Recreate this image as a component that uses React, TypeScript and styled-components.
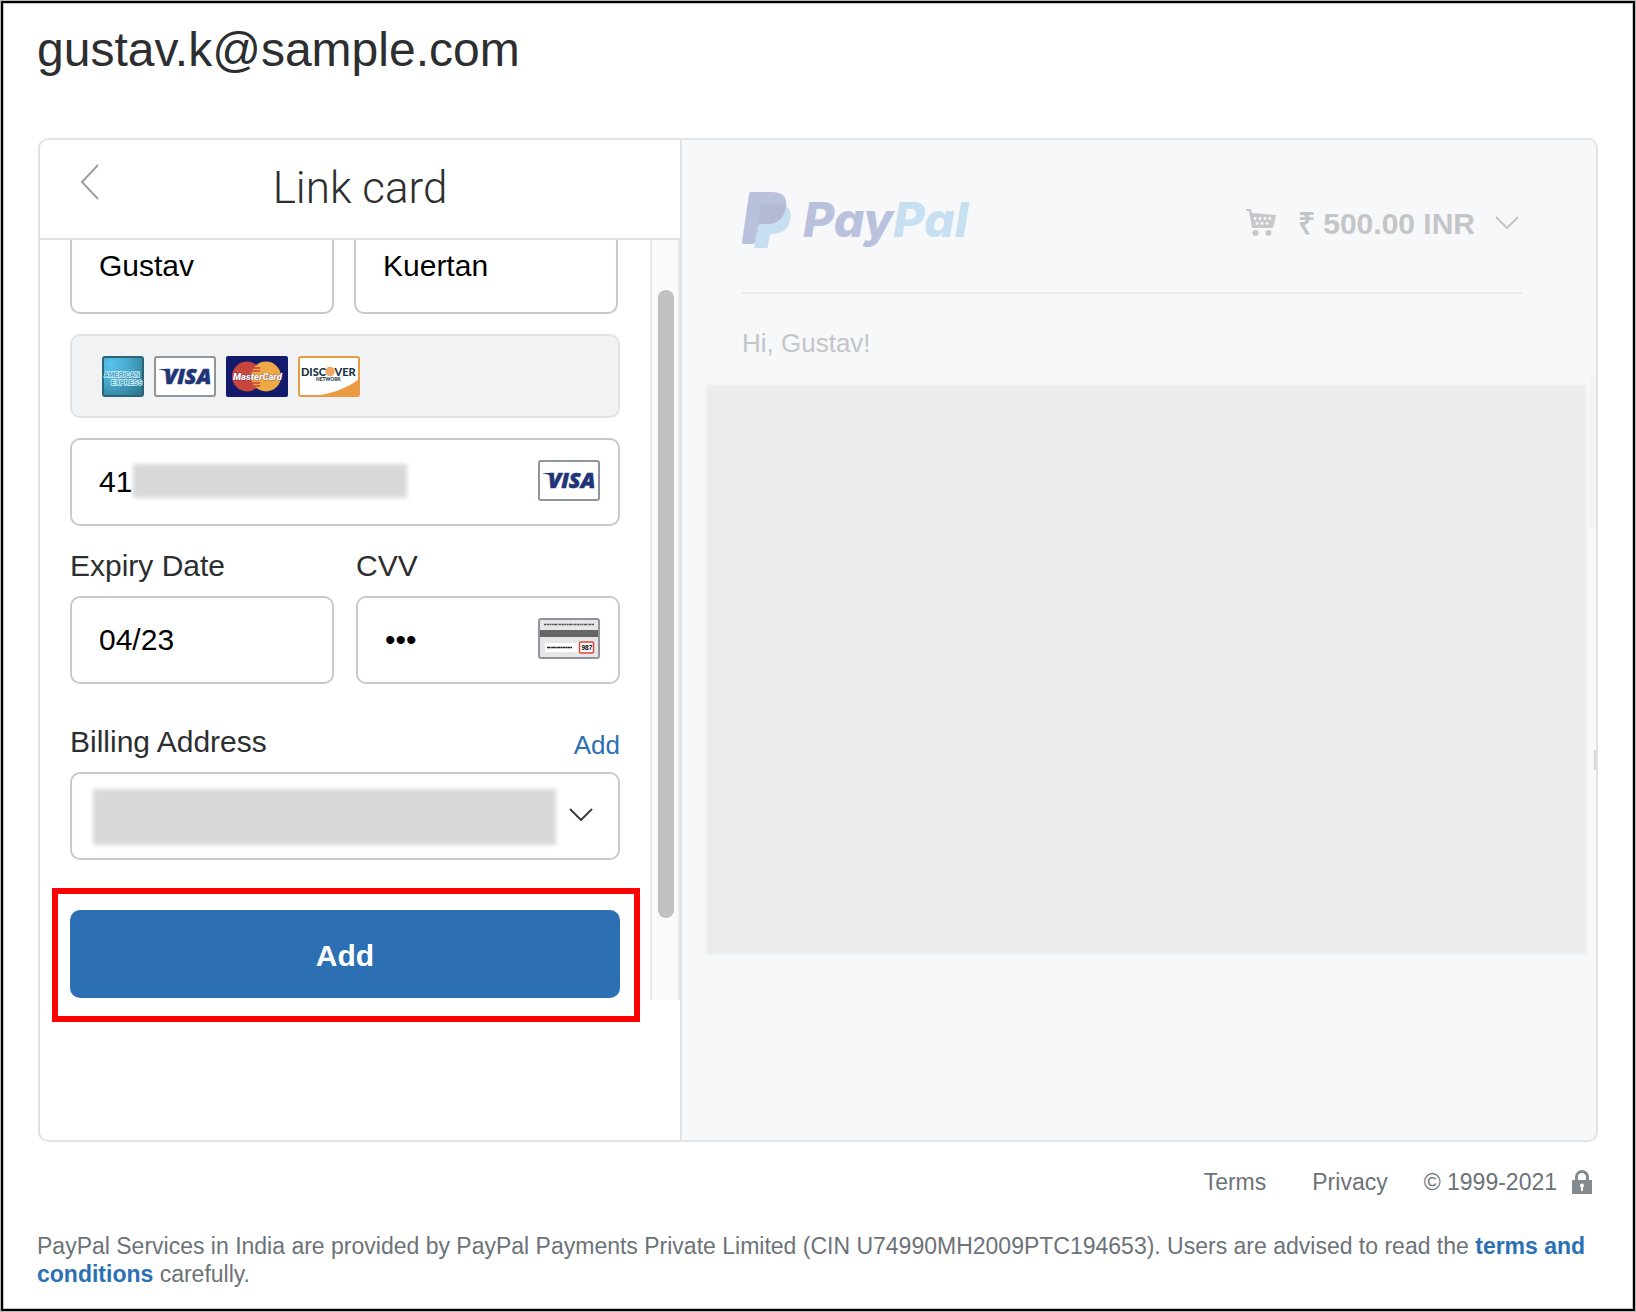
import React from "react";
import styled, { createGlobalStyle } from "styled-components";

const sans = `"Liberation Sans", Arial, Helvetica, sans-serif`;
const line = "#e1e2e3";
const fieldLine = "#c6cacf";
const blue = "#2c70b4";
const grey = "#6c7378";

const GlobalStyle = createGlobalStyle`
  *, *::before, *::after { box-sizing: border-box; }
  body { margin: 0; background: #fff; font-family: ${sans}; color: #2c2e2f; }
  button, input, select { font: inherit; }
`;

const Frame = styled.div`
  display: flex;
  min-height: 100vh;
  padding: 1px;
  background: #b8b8b8;
`;

const Page = styled.div`
  flex: 1;
  min-width: 0;
  padding: 19px 35px 20px 34px;
  border: 2px solid #000;
  background: #fff;
  box-shadow: inset 0 0 0 1px #c4c4c4;
`;

const Email = styled.h1`
  margin: 0 0 60px;
  font-size: 48px;
  line-height: 56px;
  font-weight: 400;
`;

const Card = styled.main`
  display: grid;
  grid-template-columns: 642px minmax(0, 1fr);
  min-height: 1004px;
  margin: 0 0 0 1px;
  border: 2px solid ${line};
  border-radius: 10px;
  overflow: hidden;
`;

const Wallet = styled.section`
  border-right: 2px solid ${line};
`;

const WalletHeader = styled.header`
  display: grid;
  grid-template-columns: 40px 1fr 40px;
  height: 100px;
  padding: 0 30px;
  border-bottom: 2px solid ${line};
`;

const IconButton = styled.button`
  display: flex;
  align-items: center;
  padding: 0;
  border: 0;
  background: none;
  color: inherit;
`;

const BackButton = styled(IconButton)`
  height: 84px;
  padding-left: 10px;
`;

const Title = styled.h2`
  margin: 0;
  text-align: center;
  font-family: Roboto, ${sans};
  font-size: 44px;
  line-height: 96px;
  font-weight: 300;
`;

const Scroller = styled.div`
  display: flex;
  overflow: hidden;
`;

const Form = styled.form`
  flex: 1;
  min-width: 0;
  margin-top: -22px;
  padding: 0 30px 30px;
`;

const Track = styled.div`
  width: 30px;
  height: 760px;
  padding: 50px 6px 0;
  border: solid #e8e8e8;
  border-width: 0 2px;
  background: #fafafa;
`;

const Thumb = styled.div`
  width: 16px;
  height: 628px;
  border-radius: 8px;
  background: #c1c1c1;
`;

const Row = styled.div<{ $gap: string }>`
  display: flex;
  gap: ${(p) => p.$gap};
`;

const Half = styled.div`
  flex: 0 0 48%;
`;

const Label = styled.label`
  display: block;
  font-size: 30px;
  line-height: 36px;
`;

const FieldBox = styled.div`
  position: relative;
`;

const Input = styled.input<{ $tall?: boolean }>`
  display: block;
  width: 100%;
  height: ${(p) => (p.$tall ? 96 : 88)}px;
  padding: 0 27px;
  border: 2px solid ${fieldLine};
  border-radius: 10px;
  background: #fff;
  color: #000;
  font-size: 30px;
`;

const Select = styled.select`
  display: block;
  appearance: none;
  width: 100%;
  height: 88px;
  padding: 0 27px;
  border: 2px solid ${fieldLine};
  border-radius: 10px;
  background: #fff;
`;

const Brands = styled.div`
  display: flex;
  align-items: center;
  gap: 10px;
  height: 84px;
  margin: 20px 0;
  padding: 0 30px;
  border: 2px solid ${line};
  border-radius: 10px;
  background: #f1f2f4;
`;

const FieldIcon = styled.span<{ $right: number }>`
  position: absolute;
  display: flex;
  align-items: center;
  top: 0;
  bottom: 4px;
  right: ${(p) => p.$right}px;
  pointer-events: none;
`;

const Redaction = styled.span<{ $top: number; $left: number; $width: number; $height: number }>`
  position: absolute;
  top: ${(p) => p.$top}px;
  left: ${(p) => p.$left}px;
  width: ${(p) => p.$width}px;
  height: ${(p) => p.$height}px;
  background: #d8d8d8;
  filter: blur(2px);
`;

const DateRow = styled(Row)`
  margin-top: 22px;
`;

const LabelGap = styled.div`
  margin-bottom: 12px;
`;

const AddressHead = styled.div`
  display: flex;
  align-items: flex-end;
  justify-content: space-between;
  margin: 40px 0 12px;
`;

const Link = styled.a`
  color: ${blue};
  text-decoration: none;
`;

const AddLink = styled(Link)`
  font-size: 26px;
  line-height: 30px;
`;

const Callout = styled.div`
  position: relative;
  margin-top: 50px;

  &::after {
    content: "";
    position: absolute;
    inset: -22px -20px -24px -18px;
    border: 6px solid #f00;
    pointer-events: none;
  }
`;

const Submit = styled.button`
  display: block;
  width: 100%;
  height: 88px;
  padding: 4px 0 0;
  border: 0;
  border-radius: 10px;
  background: #2c6fb3;
  color: #fff;
  font-size: 30px;
  font-weight: 700;
`;

const Summary = styled.section`
  position: relative;
  padding: 52px 74px 0 60px;
  background: #f7f8fa;
  color: #c3c5c8;

  &::before,
  &::after {
    content: "";
    position: absolute;
    right: 0;
  }

  &::before {
    top: 237px;
    width: 6px;
    height: 151px;
    background: #f2f4f2;
  }

  &::after {
    top: 610px;
    width: 2px;
    height: 20px;
    background: #d3d5d6;
  }
`;

const SummaryHeader = styled.header`
  display: flex;
  align-items: center;
  justify-content: space-between;
  height: 102px;
  padding-bottom: 44px;
  border-bottom: 2px solid #ececee;
`;

const Brand = styled.div`
  display: flex;
  align-items: center;
  gap: 12px;
`;

const Wordmark = styled.span<{ $light?: boolean }>`
  font-family: Inter, ${sans};
  font-size: 48px;
  line-height: 56px;
  font-weight: 800;
  font-style: italic;
  font-feature-settings: "cv11";
  color: ${(p) => (p.$light ? "#c6dff1" : "#bac1dc")};
`;

const CartButton = styled(IconButton)`
  margin-top: 4px;
  padding-right: 3px;
  font-size: 30px;
  font-weight: 700;
  color: #c3c5c8;
`;

const Amount = styled.span`
  margin: 0 20px 0 22px;
`;

const Greeting = styled.p`
  margin: 33px 0 0;
  font-size: 26px;
  line-height: 32px;
`;

const Masked = styled.div`
  height: 569px;
  margin: 26px -64px 0 -36px;
  background: #ebebeb;
  filter: blur(1px);
`;

const Footer = styled.footer`
  color: ${grey};
  font-size: 23px;
  line-height: 28px;
`;

const Legal = styled.nav`
  display: flex;
  justify-content: flex-end;
  align-items: center;
  padding: 26px 6px 0 0;

  a { color: inherit; margin-right: 46px; text-decoration: none; }
  a + a { margin-right: 36px; }
  span { margin-right: 15px; }
`;

const Notice = styled.p`
  margin: 36px 0 0;
`;

const StrongLink = styled(Link)`
  font-weight: 700;
`;

const Amex = () => (
  <svg width="42" height="41" viewBox="0 0 42 41" role="img" aria-label="American Express">
    <defs>
      <radialGradient id="amex" cx="0.2" cy="0.2" r="1">
        <stop offset="0" stopColor="#56c4ec" />
        <stop offset="0.5" stopColor="#46a5c8" />
        <stop offset="1" stopColor="#2f7890" />
      </radialGradient>
    </defs>
    <rect x="1" y="1" width="40" height="39" rx="2" fill="url(#amex)" stroke="#2a6578" strokeWidth="2" />
    <g fill="#3d9fc6" stroke="#d9f1fa" strokeWidth="1.4" fontFamily="Liberation Sans" fontWeight="700" fontSize="6.600" paintOrder="stroke">
      <text x="2" y="21">AMERICAN</text>
      <text x="9" y="29">EXPRESS</text>
    </g>
  </svg>
);

const Visa = () => (
  <svg width="62" height="41" viewBox="0 0 62 41" role="img" aria-label="Visa">
    <rect x="1" y="1" width="60" height="39" rx="2" fill="#fff" stroke="#8f949d" strokeWidth="2" />
    <text x="10" y="28" fontFamily="Open Sans" fontWeight="800" fontStyle="italic" fontSize="21.500" fill="#213477" stroke="#213477" strokeWidth="0.600">VISA</text>
    <path d="M5 13h9l3 8c-2-4-6-7-12-7.500z" fill="#213477" />
  </svg>
);

const MasterCard = () => (
  <svg width="62" height="41" viewBox="0 0 62 41" role="img" aria-label="MasterCard">
    <rect width="62" height="41" rx="2" fill="#121b6b" />
    <circle cx="21" cy="20.500" r="15" fill="#c6453d" />
    <circle cx="40" cy="20.500" r="15" fill="#efa944" />
    <path d="M27 12h7M26 15h8M26 27h8M27 30h7" stroke="#c6453d" strokeWidth="1.500" />
    <text x="7" y="24" fontFamily="Roboto" fontWeight="900" fontStyle="italic" fontSize="9.500" fill="#fff" stroke="#501f4b" strokeWidth="0.600" paintOrder="stroke">MasterCard</text>
  </svg>
);

const Discover = () => (
  <svg width="62" height="41" viewBox="0 0 62 41" role="img" aria-label="Discover">
    <rect x="1" y="1" width="60" height="39" rx="2" fill="#fff" />
    <path d="M61 23C50 32 35 37 18 40h43z" fill="#eb9a42" />
    <rect x="1" y="1" width="60" height="39" rx="2" fill="none" stroke="#eb9a42" strokeWidth="2" />
    <circle cx="32" cy="15.500" r="4.800" fill="#f2a868" />
    <g fontFamily="Lato" fontWeight="900" fill="#17333f">
      <text x="3" y="19.500" fontSize="11">DISC</text>
      <text x="36.500" y="19.500" fontSize="11">VER</text>
      <text x="18" y="25" fontSize="4.800">NETWORK</text>
    </g>
  </svg>
);

const CardBack = () => (
  <svg width="62" height="41" viewBox="0 0 62 41" aria-hidden="true">
    <rect x="1" y="1" width="60" height="39" rx="2" fill="#e6e6e6" stroke="#8f949d" strokeWidth="2" />
    <path d="M6 6.500h50" stroke="#555" strokeWidth="1.500" strokeDasharray="2 0.500 3 0.500 1 0.500" />
    <rect x="2" y="12" width="58" height="7" fill="#666" />
    <rect x="7" y="25" width="34" height="9" fill="#fff" />
    <path d="M9 29.500h25" stroke="#222" strokeWidth="1.600" strokeDasharray="3 0.300 1.500 0.300" />
    <rect x="41.500" y="24" width="14" height="11" rx="1" fill="#fff" stroke="#e2473f" strokeWidth="1.500" />
    <text x="43.500" y="32" fontFamily="Liberation Sans" fontWeight="700" fontSize="6.500" fill="#000">987</text>
  </svg>
);

const Chevron = ({ color }: { color: string }) => (
  <svg width="24" height="14" viewBox="0 0 24 14" fill="none" stroke={color} strokeWidth="2" aria-hidden="true">
    <path d="M1 2l11 11L23 2" />
  </svg>
);

const PayPalMark = () => (
  <svg width="49" height="56" viewBox="0 0 49 56" aria-hidden="true">
    <path d="M44 14c4 3 6 8 4 15-2 9-9 13-18 13h-2l-2 12c0 1-1 2-2 2H12l4-24z" fill="#c6dff1" />
    <path d="M9 0h21c10 0 16 5 14 15-2 12-9 17-19 17h-6c-2 0-3 1-3 3l-3 15c0 1-1 2-2 2H1c-1 0-1-1-1-2L7 2c0-1 1-2 2-2z" fill="#bac1dc" />
    <path d="M20 13h18c3 0 5 0 6 1-2 12-9 18-19 18h-6c-2 0-3 1-3 2l3-19c0-1 0-2 1-2z" fill="#b4bad3" />
  </svg>
);

const Cart = () => (
  <svg width="30" height="27" viewBox="0 0 30 27" aria-hidden="true" fill="#c5c9cc">
    <path d="M0 0h5l1 4 24 2-3 13H6L3 2H0z" />
    <circle cx="9.500" cy="24" r="3" />
    <circle cx="22.500" cy="24" r="3" />
    <g fill="#f7f8fa">
      {[9, 14, 19, 24].map((x) => <circle key={x} cx={x} cy="9.500" r="1.400" />)}
      {[11, 16, 21].map((x) => <circle key={x} cx={x} cy="14.500" r="1.400" />)}
    </g>
  </svg>
);

const Lock = () => (
  <svg width="20" height="24" viewBox="0 0 20 24" aria-label="Secure" role="img">
    <path d="M4.500 12V7a5.500 5.500 0 0 1 11 0v5" fill="none" stroke="#858a8e" strokeWidth="3" />
    <rect y="10" width="20" height="14" fill="#858a8e" />
    <circle cx="10" cy="15.500" r="2" fill="#fff" />
    <rect x="9" y="16" width="2" height="5" fill="#fff" />
  </svg>
);

export default function App() {
  return (
    <Frame>
      <GlobalStyle />
      <Page>
        <Email>gustav.k@sample.com</Email>
        <Card>
          <Wallet>
            <WalletHeader>
              <BackButton type="button" aria-label="Back">
                <svg width="20" height="36" viewBox="0 0 20 36" fill="none" stroke="#9da0a3" strokeWidth="2">
                  <path d="M18 1L2 18l16 17" />
                </svg>
              </BackButton>
              <Title>Link card</Title>
            </WalletHeader>
            <Scroller>
              <Form onSubmit={(e: React.FormEvent) => e.preventDefault()}>
                <Row $gap="20px">
                  <Half><Input $tall aria-label="First name" defaultValue="Gustav" /></Half>
                  <Half><Input $tall aria-label="Last name" defaultValue="Kuertan" /></Half>
                </Row>
                <Brands>
                  <Amex />
                  <Visa />
                  <MasterCard />
                  <Discover />
                </Brands>
                <FieldBox>
                  <Input aria-label="Card number" defaultValue="41" />
                  <Redaction $top={26} $left={63} $width={274} $height={34} />
                  <FieldIcon $right={20}><Visa /></FieldIcon>
                </FieldBox>
                <DateRow $gap="4%">
                  <Half>
                    <LabelGap><Label htmlFor="expiry">Expiry Date</Label></LabelGap>
                    <Input id="expiry" defaultValue="04/23" />
                  </Half>
                  <Half>
                    <LabelGap><Label htmlFor="cvv">CVV</Label></LabelGap>
                    <FieldBox>
                      <Input id="cvv" type="password" defaultValue="123" />
                      <FieldIcon $right={20}><CardBack /></FieldIcon>
                    </FieldBox>
                  </Half>
                </DateRow>
                <AddressHead>
                  <Label htmlFor="billing">Billing Address</Label>
                  <AddLink href="#address">Add</AddLink>
                </AddressHead>
                <FieldBox>
                  <Select id="billing"><option value="" /></Select>
                  <Redaction $top={17} $left={23} $width={463} $height={56} />
                  <FieldIcon $right={27}><Chevron color="#3c3e40" /></FieldIcon>
                </FieldBox>
                <Callout>
                  <Submit type="submit">Add</Submit>
                </Callout>
              </Form>
              <Track><Thumb /></Track>
            </Scroller>
          </Wallet>
          <Summary>
            <SummaryHeader>
              <Brand>
                <PayPalMark />
                <div><Wordmark>Pay</Wordmark><Wordmark $light>Pal</Wordmark></div>
              </Brand>
              <CartButton type="button">
                <Cart />
                <Amount>₹ 500.00 INR</Amount>
                <Chevron color="#c3c5c8" />
              </CartButton>
            </SummaryHeader>
            <Greeting>Hi, Gustav!</Greeting>
            <Masked />
          </Summary>
        </Card>
        <Footer>
          <Legal>
            <a href="#terms">Terms</a>
            <a href="#privacy">Privacy</a>
            <span>© 1999-2021</span>
            <Lock />
          </Legal>
          <Notice>
            PayPal Services in India are provided by PayPal Payments Private Limited (CIN U74990MH2009PTC194653). Users
            are advised to read the <StrongLink href="#conditions">terms and conditions</StrongLink> carefully.
          </Notice>
        </Footer>
      </Page>
    </Frame>
  );
}
